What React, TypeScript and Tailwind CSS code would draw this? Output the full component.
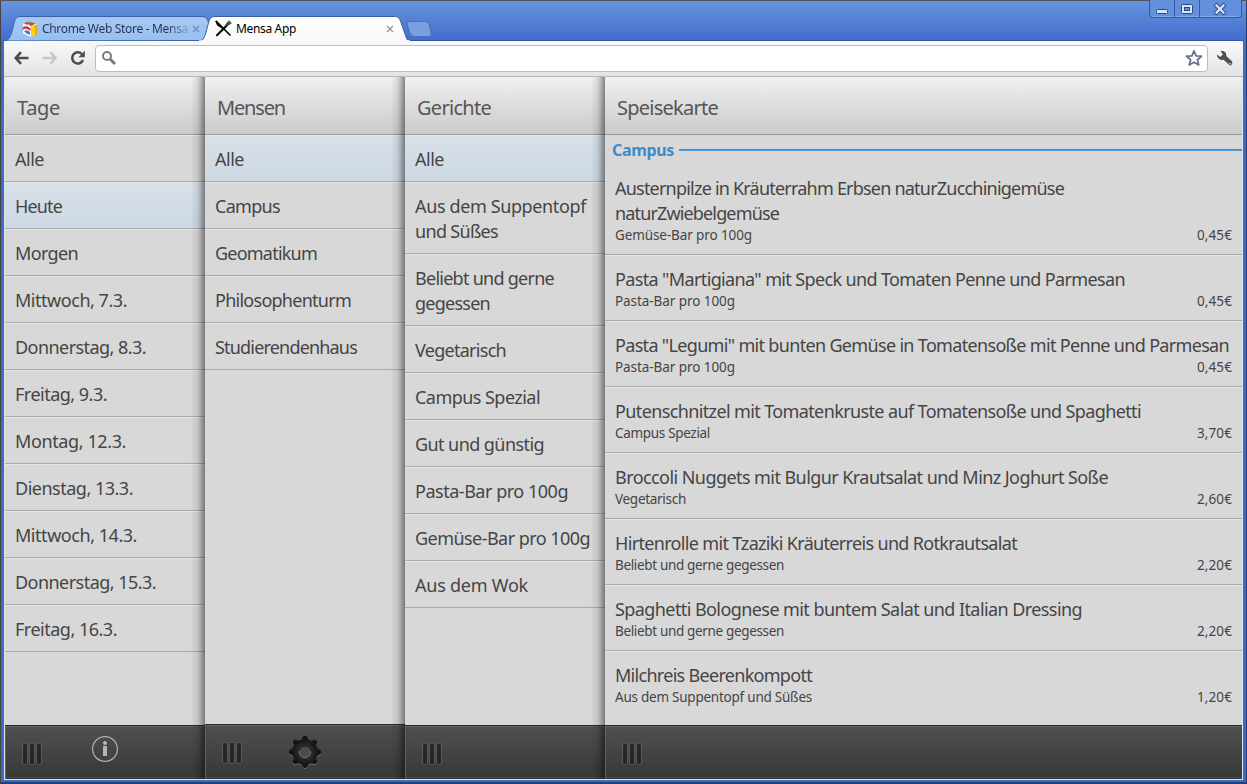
import { useLayoutEffect, useRef, useState } from "react";
import type { ReactNode } from "react";

type FitProps = { children: string; w?: number; className?: string };

/** One line of text whose tracking is adjusted so that it spans `w` pixels. */
function Fit({ children, w, className = "" }: FitProps) {
  const ref = useRef<HTMLSpanElement>(null);
  const [tracking, setTracking] = useState(0);
  useLayoutEffect(() => {
    const el = ref.current;
    if (!el || !w) return;
    el.style.letterSpacing = "0px";
    const natural = el.getBoundingClientRect().width;
    const next = (w - natural) / children.length;
    el.style.letterSpacing = `${next}px`;
    setTracking(next);
  }, [children, w]);
  return (
    <span ref={ref} className={`inline-block whitespace-pre ${className}`} style={{ letterSpacing: `${tracking}px` }}>
      {children}
    </span>
  );
}

type Line = [string, number];
type Entry = { lines: Line[]; active?: boolean };

const days: Entry[] = [
  { lines: [["Alle", 29]] },
  { lines: [["Heute", 47]], active: true },
  { lines: [["Morgen", 63]] },
  { lines: [["Mittwoch, 7.3.", 112]] },
  { lines: [["Donnerstag, 8.3.", 131]] },
  { lines: [["Freitag, 9.3.", 92]] },
  { lines: [["Montag, 12.3.", 111]] },
  { lines: [["Dienstag, 13.3.", 118]] },
  { lines: [["Mittwoch, 14.3.", 122]] },
  { lines: [["Donnerstag, 15.3.", 141]] },
  { lines: [["Freitag, 16.3.", 102]] },
];

const canteens: Entry[] = [
  { lines: [["Alle", 29]], active: true },
  { lines: [["Campus", 65]] },
  { lines: [["Geomatikum", 102]] },
  { lines: [["Philosophenturm", 136]] },
  { lines: [["Studierendenhaus", 142]] },
];

const dishes: Entry[] = [
  { lines: [["Alle", 29]], active: true },
  { lines: [["Aus dem Suppentopf", 171], ["und Süßes", 83]] },
  { lines: [["Beliebt und gerne", 139], ["gegessen", 75]] },
  { lines: [["Vegetarisch", 91]] },
  { lines: [["Campus Spezial", 125]] },
  { lines: [["Gut und günstig", 129]] },
  { lines: [["Pasta-Bar pro 100g", 153]] },
  { lines: [["Gemüse-Bar pro 100g", 175]] },
  { lines: [["Aus dem Wok", 113]] },
];

type Meal = { title: Line[]; sub: Line; price: string };

const meals: Meal[] = [
  {
    title: [["Austernpilze in Kräuterrahm Erbsen naturZucchinigemüse", 449], ["naturZwiebelgemüse", 164]],
    sub: ["Gemüse-Bar pro 100g", 137],
    price: "0,45€",
  },
  { title: [['Pasta "Martigiana" mit Speck und Tomaten Penne und Parmesan', 510]], sub: ["Pasta-Bar pro 100g", 120], price: "0,45€" },
  { title: [['Pasta "Legumi" mit bunten Gemüse in Tomatensoße mit Penne und Parmesan', 614]], sub: ["Pasta-Bar pro 100g", 120], price: "0,45€" },
  { title: [["Putenschnitzel mit Tomatenkruste auf Tomatensoße und Spaghetti", 526]], sub: ["Campus Spezial", 95], price: "3,70€" },
  { title: [["Broccoli Nuggets mit Bulgur Krautsalat und Minz Joghurt Soße", 493]], sub: ["Vegetarisch", 71], price: "2,60€" },
  { title: [["Hirtenrolle mit Tzaziki Kräuterreis und Rotkrautsalat", 402]], sub: ["Beliebt und gerne gegessen", 169], price: "2,20€" },
  { title: [["Spaghetti Bolognese mit buntem Salat und Italian Dressing", 467]], sub: ["Beliebt und gerne gegessen", 169], price: "2,20€" },
  { title: [["Milchreis Beerenkompott", 197]], sub: ["Aus dem Suppentopf und Süßes", 197], price: "1,20€" },
];

function List({ entries }: { entries: Entry[] }) {
  return (
    <ul>
      {entries.map((e, i) => (
        <li
          key={i}
          className={`border-b border-b-[#a9a9a9] px-[10px] pt-[12px] pb-[9px] ${
            e.active
              ? "bg-linear-to-b from-[#d9e0e8] to-[#cdd9e4] shadow-[inset_0_1px_0_#e2e8ee]"
              : "shadow-[inset_0_1px_0_#e6e6e6]"
          }`}
        >
          {e.lines.map(([text, w]) => (
            <div key={text} className="h-[25px] text-[18px] leading-[25px]">
              <Fit w={w}>{text}</Fit>
            </div>
          ))}
        </li>
      ))}
    </ul>
  );
}

function Grip() {
  return (
    <svg width="22" height="24" viewBox="0 0 22 24" className="shrink-0">
      {[0.5, 7.5, 14.5].map((x) => (
        <rect key={x} x={x} y="0.5" width="5" height="21" rx="2" fill="#262626" stroke="#5c5c5c" strokeWidth="1" />
      ))}
    </svg>
  );
}

type ColumnProps = {
  title: Line;
  wide?: boolean;
  raised?: boolean;
  action?: ReactNode;
  children: ReactNode;
};

function Column({ title, wide, raised, action, children }: ColumnProps) {
  return (
    <section className={`relative flex h-full flex-col bg-[#d8d8d8] ${wide ? "min-w-0 flex-1" : "w-[200px] shrink-0"}`}>
      <header className="flex h-[58px] shrink-0 items-center border-b border-[#999] bg-linear-to-b from-[#f0f0f0] to-[#cbcbcb] px-3 pt-[5px] text-[20px] text-[#555]">
        <Fit w={title[1]}>{title[0]}</Fit>
      </header>
      <div className="min-h-0 flex-1 overflow-hidden">{children}</div>
      <footer
        className={`flex shrink-0 border-t border-t-[#292929] bg-linear-to-b from-[#505050] to-[#373737] pl-[17px] shadow-[inset_1px_1px_0_#626262,inset_0_-1px_0_#303030,inset_0_-2px_0_#4e4e4e] ${
          raised ? "h-[55px]" : "h-[54px]"
        }`}
      >
        <div className="flex pt-[17px]">
          <Grip />
        </div>
        {action}
      </footer>
      {!wide && (
        <div className="pointer-events-none absolute inset-y-0 right-0 w-[14px] bg-linear-to-r from-transparent via-black/10 to-black/45" />
      )}
    </section>
  );
}

function InfoIcon() {
  return (
    <svg width="28" height="28" viewBox="0 0 28 28" className="mt-[9px] ml-[47px]">
      <circle cx="14" cy="14" r="12.4" fill="none" stroke="#b2b2b2" strokeWidth="1.2" />
      <circle cx="14" cy="7.9" r="2" fill="#b9b9bb" />
      <path d="M12 11h4v10h-4z" fill="#b4b4b6" />
    </svg>
  );
}

function GearIcon() {
  const teeth = [0, 45, 90, 135, 180, 225, 270, 315];
  return (
    <svg width="34" height="35" viewBox="-17 -17 34 35" className="mt-[10px] ml-[44px]">
      <defs>
        <radialGradient id="gear" cx="0" cy="0" r="16" gradientUnits="userSpaceOnUse">
          <stop offset="0.35" stopColor="#303030" />
          <stop offset="0.7" stopColor="#1a1a1a" />
          <stop offset="1" stopColor="#0e0e0e" />
        </radialGradient>
      </defs>
      {["#6c6c6c", "url(#gear)"].map((fill, layer) => (
        <g key={fill} fill={fill} transform={layer === 0 ? "translate(0 1)" : undefined}>
          <circle r="12" />
          {teeth.map((a) => (
            <path
              key={a}
              d="M-7.2-10.4C-4.8-12-3-11.8-2.4-14.6Q-2.1-16 0-16T2.4-14.6C3-11.8 4.8-12 7.2-10.4L0 0z"
              transform={`rotate(${a})`}
            />
          ))}
        </g>
      ))}
      <circle r="5.6" fill="#4b4b4b" stroke="#777" strokeWidth="0.9" />
      <path d="M-5.7-1A5.8 5.8 0 0 1 5.7-1" fill="none" stroke="#1a1a1a" />
    </svg>
  );
}

function StoreIcon() {
  return (
    <svg width="16" height="16" viewBox="0 0 16 16" className="shrink-0">
      <path d="M1 3 9 5.5V16L1 12.5z" fill="#f3f6fa" />
      <path d="M9 5.5 15.5 3v10L9 16z" fill="#ffd21a" />
      <path d="M12.6 4.2 15.5 3v10l-2.4.9z" fill="#f2a900" />
      <path d="M1 3 6 .5 15.5 3 9 5.5z" fill="#eef3f7" />
      <path d="M2 2.5 5.6.6 8 2.2 5 3.8z" fill="#e03c2e" />
      <path d="M7 .8l7 1.8-2.5 1L6.5 2.3z" fill="#2f9e44" />
      <path d="M6 3l3-1 3 1.6L9 5z" fill="#e03c2e" />
      <path d="M.8 6.5Q4 3.8 8.7 7.5L8.4 10Q4 6 .8 9z" fill="#d9322a" />
      <path d="M2 10.2Q5 8 8 11v2.4Q5 13.5 2 10.2z" fill="#3a7be0" />
    </svg>
  );
}

function CutleryIcon() {
  return (
    <svg width="17" height="17" viewBox="0 0 17 17" className="shrink-0" fill="none" stroke="#0a0a0a" strokeLinecap="round">
      <path d="M1.3 1.3 15 15" strokeWidth="1.7" />
      <path d="M1.4 1.5Q2 5 5.5 6.6L8 8.4" strokeWidth="1.7" />
      <path d="M2 15.3 12.2 5" strokeWidth="2.1" />
      <path d="M10.7 5.2 14 1M11.8 5.8 16 3M12 4.5l3.3-2.6" strokeWidth="1.2" stroke="#444" />
    </svg>
  );
}

function Close({ color }: { color: string }) {
  return (
    <svg width="8" height="8" viewBox="0 0 8 8" className="shrink-0" stroke={color} strokeWidth="1.4">
      <path d="M1 1l6 6M7 1 1 7" />
    </svg>
  );
}

function TabStrip() {
  return (
    <div className="relative h-[40px] shrink-0">
      <svg width="1247" height="41" viewBox="0 0 1247 41" className="absolute top-0 left-0">
        <defs>
          <linearGradient id="idle" x1="0" y1="0" x2="0" y2="1">
            <stop offset="0" stopColor="#a6c8f3" />
            <stop offset="1" stopColor="#97bff0" />
          </linearGradient>
          <linearGradient id="front" x1="0" y1="0" x2="0" y2="1">
            <stop offset="0" stopColor="#fff" />
            <stop offset="1" stopColor="#f9f9f9" />
          </linearGradient>
        </defs>
        <path d="M4 40.5h1239" stroke="#2f569f" />
        <path d="M5 41C9 40 10 37 11.5 33L14.5 21Q15.8 16.5 20 16.5H202Q206.5 16.5 208 21L214 40.5z" fill="url(#idle)" stroke="#3c62a5" />
        <path d="M198 41.5C203 41 204 38 205.5 34L209 21Q210.3 16.5 215 16.5H395Q399 16.5 400.5 21L405 34C406.3 38 407 41 411 41.5z" fill="url(#front)" stroke="#3c62a5" />
        <path d="M199 41h211" stroke="#fafafa" strokeWidth="1.5" />
        <path d="M409 21.5H426Q428 21.5 429 24L431.3 33Q431.8 36.5 429 36.5H414Q411 36.5 410 33L407 24Q406.5 21.5 409 21.5z" fill="#789fe0" stroke="#456fb9" />
      </svg>
      <div className="relative flex h-[40px] pt-[20px] text-[12px] leading-[17px]">
        <div className="flex h-[17px] w-[186px] items-center pl-[22px]">
          <StoreIcon />
          <div className="ml-[4px] w-[147px] shrink-0 overflow-hidden bg-linear-to-r from-[#26344a] from-85% to-[#8fafd9] bg-clip-text text-transparent">
            <Fit w={146}>Chrome Web Store - Mensa</Fit>
          </div>
          <div className="ml-[3px] flex">
            <Close color="#7190b8" />
          </div>
        </div>
        <div className="flex h-[17px] w-[209px] items-center pl-[29px] text-black">
          <CutleryIcon />
          <div className="ml-[4px] w-[150px] shrink-0">
            <Fit w={60}>Mensa App</Fit>
          </div>
          <Close color="#999" />
        </div>
      </div>
      <div className="absolute top-0 right-[5px] flex h-[18px] divide-x divide-[#34599e] rounded-b-[4px] border border-t-0 border-[#34599e] bg-[#6290dc] shadow-[inset_0_-1px_0_#83a9e6]">
        <div className="flex w-[25px] justify-center">
          <svg width="13" height="17" viewBox="0 0 13 17">
            <rect x="0.5" y="9.5" width="11" height="4" rx="1" fill="#d6e5fa" stroke="#2e4a7c" />
          </svg>
        </div>
        <div className="flex w-[25px] justify-center">
          <svg width="13" height="17" viewBox="0 0 13 17">
            <rect x="0.5" y="4.5" width="11" height="9" rx="1" fill="#d6e5fa" stroke="#2e4a7c" />
            <rect x="3.5" y="7.5" width="5" height="3" fill="#6892d6" stroke="#2e4a7c" />
          </svg>
        </div>
        <div className="flex w-[41px] justify-center">
          <svg width="13" height="17" viewBox="0 0 13 17">
            <path d="M2.5 5.5 9.5 12.5M9.5 5.5 2.5 12.5" stroke="#2e4a7c" strokeWidth="4.2" strokeLinecap="square" />
            <path d="M2.5 5.5 9.5 12.5M9.5 5.5 2.5 12.5" stroke="#d6e5fa" strokeWidth="2.3" strokeLinecap="square" />
          </svg>
        </div>
      </div>
    </div>
  );
}

function Toolbar() {
  return (
    <div className="mx-[4px] flex h-[37px] shrink-0 items-center rounded-tr-[3px] border-b border-[#b5b7ba] bg-linear-to-b from-[#fafafa] to-[#e2e3e2] pl-[10px]">
      <svg width="16" height="14" viewBox="0 0 16 14" fill="none" stroke="#4c4c4c" strokeWidth="2.6">
        <path d="M7 1.2 1.8 7 7 12.8M2.3 7H14.5" />
      </svg>
      <svg width="16" height="14" viewBox="0 0 16 14" className="ml-[12px]" fill="none" stroke="#c6c6c6" strokeWidth="2.4">
        <path d="M8.5 1.2 13.7 7l-5.2 5.8M13.2 7H.5" />
      </svg>
      <svg width="16" height="16" viewBox="0 0 16 16" className="ml-[12px]">
        <path d="M11.8 4A5.6 5.6 0 1 0 13 10" fill="none" stroke="#4c4c4c" strokeWidth="2.5" />
        <path d="M14.8 .8V7.2H8.5z" fill="#4c4c4c" />
      </svg>
      <div className="ml-[9px] flex h-[27px] w-[1113px] items-center justify-between rounded-[4px] border border-[#bcbebd] bg-white pr-[4px] pl-[5px]">
        <svg width="16" height="16" viewBox="0 0 16 16" fill="none" stroke="#7a7a7a">
          <circle cx="6" cy="6" r="4" strokeWidth="2" />
          <path d="M9 9l5 5" strokeWidth="2.8" />
        </svg>
        <svg width="18" height="18" viewBox="0 0 18 18">
          <path d="M9 1.8 11.1 6.8 16.5 7.2 12.4 10.7 13.7 16 9 13.2 4.3 16 5.6 10.7 1.5 7.2 6.9 6.8z" fill="#fff" stroke="#68758f" strokeWidth="1.8" strokeLinejoin="round" />
        </svg>
      </div>
      <svg width="17" height="17" viewBox="0 0 17 17" className="ml-[8px]">
        <path d="M4.5 1.2C7.5.3 11 2.2 10.2 6L16.2 11.6Q17 14.2 14.3 15.8L7.6 9.7C4.3 10.6 1 8.2 1 4.4L4.2 6.9 7 4.5z" fill="#4f4f4f" />
        <circle cx="14" cy="13.6" r="0.8" fill="#ddd" />
      </svg>
    </div>
  );
}

export default function App() {
  return (
    <div className="flex h-[784px] w-[1247px] flex-col overflow-hidden bg-[#3b6bc2] bg-[linear-gradient(#6895e0,#426dcb_40px,#3b6bc2_60px)] font-['Noto_Sans','Open_Sans',sans-serif] text-[#454545] shadow-[inset_0_1px_0_#555,inset_1px_0_0_#444,inset_-1px_0_0_#223f78,inset_0_-2px_0_#223f78]">
      <TabStrip />
      <Toolbar />
      <main className="mx-[4px] flex h-[703px] shrink-0 border-x border-b border-[#dfe5ee]">
        <Column title={["Tage", 43]} action={<InfoIcon />}>
          <List entries={days} />
        </Column>
        <Column title={["Mensen", 68]} raised action={<GearIcon />}>
          <List entries={canteens} />
        </Column>
        <Column title={["Gerichte", 74]}>
          <List entries={dishes} />
        </Column>
        <Column title={["Speisekarte", 101]} wide>
          <div className="flex h-[32px] items-start pl-[7px] text-[16px] leading-[31px] font-bold text-[#3d8bcb]">
            <Fit w={62}>Campus</Fit>
            <div className="mt-[14px] ml-[5px] h-[2px] flex-1 bg-linear-to-b from-[#347fba] to-[#55aaf0]" />
          </div>
          <ul>
            {meals.map((m, i) => (
              <li
                key={i}
                className={`border-b border-[#a9a9a9] px-[10px] pb-[10px] last:border-b-0 ${
                  i === 0 ? "pt-[9px]" : "pt-[12px] shadow-[inset_0_1px_0_#e6e6e6]"
                }`}
              >
                {m.title.map(([text, w]) => (
                  <div key={text} className="h-[25px] text-[18px] leading-[25px]">
                    <Fit w={w}>{text}</Fit>
                  </div>
                ))}
                <div className="flex h-[18px] justify-between text-[13.5px] leading-[18px]">
                  <Fit w={m.sub[1]}>{m.sub[0]}</Fit>
                  <Fit w={35}>{m.price}</Fit>
                </div>
              </li>
            ))}
          </ul>
        </Column>
      </main>
    </div>
  );
}
